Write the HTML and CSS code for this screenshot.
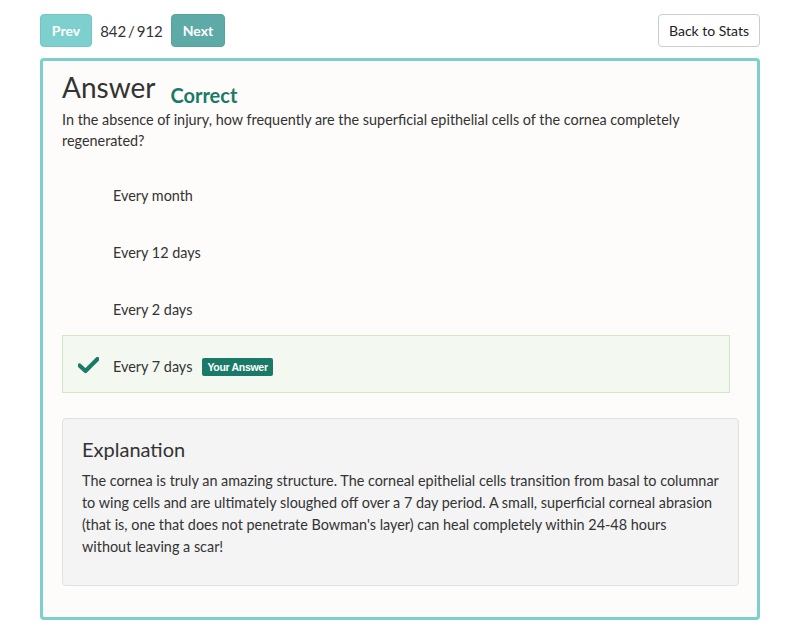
FILE: index.html
```html
<!DOCTYPE html>
<html lang="en">
<head>
<meta charset="utf-8">
<title>Answer</title>
<link rel="stylesheet" href="styles.css">
</head>
<body>
<div class="page">
  <div class="toolbar">
    <div class="pager">
      <button class="btn btn-prev">Prev</button>
      <span class="count">842 / 912</span>
      <button class="btn btn-next">Next</button>
    </div>
    <button class="btn btn-back">Back to Stats</button>
  </div>
  <div class="card">
    <div class="title-row">
      <h1 class="title">Answer</h1>
      <span class="status">Correct</span>
    </div>
    <p class="question">In the absence of injury, how frequently are the superficial epithelial cells of the cornea completely regenerated?</p>
    <ul class="options">
      <li class="option"><span class="check"></span><span class="opt-text">Every month</span></li>
      <li class="option"><span class="check"></span><span class="opt-text">Every 12 days</span></li>
      <li class="option"><span class="check"></span><span class="opt-text">Every 2 days</span></li>
      <li class="option option-correct">
        <span class="check"><svg width="21" height="17" viewBox="0 0 21 17"><path d="M1.5 8.5 L7.5 14 L19.5 2" fill="none" stroke="#1b7a68" stroke-width="4.2" stroke-linecap="round" stroke-linejoin="round"/></svg></span>
        <span class="opt-text">Every 7 days</span>
        <span class="badge">Your Answer</span>
      </li>
    </ul>
    <div class="explanation">
      <h2 class="exp-title">Explanation</h2>
      <p class="exp-text">The cornea is truly an amazing structure. The corneal epithelial cells transition from basal to columnar to wing cells and are ultimately sloughed off over a 7 day period. A small, superficial corneal abrasion (that is, one that does not penetrate Bowman's layer) can heal completely within 24-48 hours without leaving a scar!</p>
    </div>
  </div>
</div>
</body>
</html>
```

FILE: styles.css
```css
* { box-sizing: border-box; }
html, body { margin: 0; padding: 0; background: #ffffff; }
body {
  font-family: Lato, "Open Sans", sans-serif;
  color: #333333;
  font-size: 14.4px;
}
.page {
  width: 720px;
  margin: 0 40px;
  padding-top: 14px;
}
.toolbar {
  display: flex;
  justify-content: space-between;
  align-items: center;
  height: 33px;
}
.pager {
  display: flex;
  align-items: center;
}
.btn {
  font-family: Lato, sans-serif;
  height: 33px;
  border-radius: 4px;
  font-size: 14px;
  cursor: pointer;
}
.btn-prev, .btn-next {
  color: #ffffff;
  font-weight: 700;
  border: 1px solid transparent;
}
.btn-prev {
  width: 52px;
  background: #7dd0cd;
  border-color: #72c6c3;
}
.btn-next {
  width: 54px;
  background: #5eaaa7;
  border-color: #58a29f;
}
.count {
  width: 79px;
  text-align: center;
  font-size: 15px;
  word-spacing: -2px;
  color: #333;
}
.btn-back {
  width: 102px;
  background: #fff;
  border: 1px solid #cccccc;
  color: #222;
  font-size: 14px;
}
.card {
  margin-top: 11px;
  border: 3px solid #7dcfcb;
  border-radius: 4px;
  background: #fdfcfa;
  padding: 6px 18px 31px 19px;
}
.title-row {
  display: flex;
  align-items: baseline;
}
.title {
  margin: 0;
  font-size: 28px;
  font-weight: 400;
  line-height: 40px;
  color: #333;
}
.status {
  margin-left: 15px;
  font-size: 20px;
  font-weight: 700;
  color: #1a7a68;
  position: relative;
  top: 5px;
}
.question {
  margin: 2px 0 0;
  line-height: 21px;
}
.options {
  list-style: none;
  margin: 13px 9px 0 0;
  padding: 0;
}
.option {
  display: flex;
  align-items: center;
  height: 58px;
  margin-bottom: -1px;
  border: 1px solid transparent;
  padding: 5px 15px 0;
}
.option-correct {
  background: #f3f9f1;
  border-color: #cfe6c7;
  margin-bottom: 0;
}
.check {
  width: 35px;
  display: flex;
  align-items: center;
  position: relative;
  top: -1px;
}
.opt-text {
  line-height: 21px;
}
.badge {
  margin-left: 10px;
  background: #1a7a68;
  color: #fff;
  font-family: "Liberation Sans", Arial, sans-serif;
  font-weight: 700;
  font-size: 10.5px;
  line-height: 18px;
  padding: 0 5px;
  border-radius: 2px;
  letter-spacing: -0.3px;
}
.explanation {
  margin-top: 25px;
  background: #f4f4f4;
  border: 1px solid #e0e0e0;
  border-radius: 4px;
  padding: 15px 19px 27px;
}
.exp-title {
  margin: 0;
  font-size: 20px;
  font-weight: 400;
  line-height: 30px;
  color: #333;
}
.exp-text {
  margin: 6px 0 0;
  line-height: 22px;
}
```
